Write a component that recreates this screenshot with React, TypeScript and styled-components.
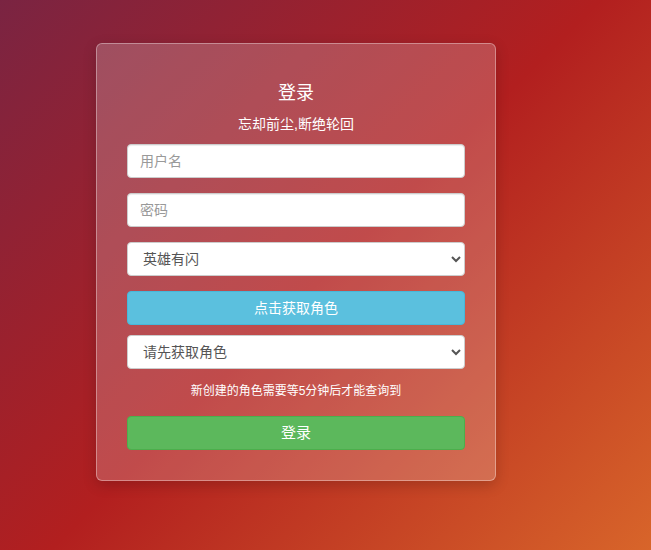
import { createGlobalStyle } from "styled-components";
import styled from "styled-components";

const GlobalStyle = createGlobalStyle`
  html, body {
    margin: 0;
    padding: 0;
  }
  body {
    min-height: 100vh;
    background: linear-gradient(135deg, #7a2442 0%, #b21f1f 50%, #d8652a 100%);
    font-family: "Helvetica Neue", Helvetica, Arial, "Noto Sans CJK SC", sans-serif;
    font-size: 14px;
    color: #333;
  }
  #root {
    min-height: 100vh;
  }
`;

const Page = styled.div`
  padding: 43px 0 0 96px;
  box-sizing: border-box;
  min-height: 100vh;
`;

const Card = styled.div`
  width: 400px;
  box-sizing: border-box;
  padding: 30px 30px 30px;
  border: 1px solid rgba(255, 255, 255, 0.35);
  border-radius: 6px;
  background: rgba(255, 255, 255, 0.2);
  box-shadow: 0 4px 14px rgba(0, 0, 0, 0.18);
  display: flex;
  flex-direction: column;
  text-align: center;
`;

const Title = styled.h3`
  margin: 9px 0 0;
  font-size: 18px;
  font-weight: 400;
  line-height: 20px;
  color: #fff;
`;

const Subtitle = styled.p`
  margin: 11px 0 10px;
  font-size: 14px;
  line-height: 20px;
  color: #fff;
`;

const Input = styled.input<{ $gap?: number }>`
  display: block;
  width: 100%;
  height: 34px;
  box-sizing: border-box;
  margin: 0 0 ${(p) => p.$gap ?? 15}px;
  padding: 6px 12px;
  font: inherit;
  color: #555;
  background: #fff;
  border: 1px solid #ccc;
  border-radius: 4px;
  box-shadow: inset 0 1px 1px rgba(0, 0, 0, 0.075);
  &::placeholder {
    color: #999;
  }
`;

const Select = styled.select<{ $gap?: number }>`
  display: block;
  width: 100%;
  height: 34px;
  box-sizing: border-box;
  margin: 0 0 ${(p) => p.$gap ?? 15}px;
  padding: 6px 8px 6px 11px;
  font: inherit;
  color: #555;
  background: #fff;
  border: 1px solid #ccc;
  border-radius: 4px;
`;

const Button = styled.button<{ $kind: "info" | "success"; $gap?: number }>`
  display: block;
  width: 100%;
  height: 34px;
  box-sizing: border-box;
  margin: 0 0 ${(p) => p.$gap ?? 0}px;
  padding: 6px 12px;
  font-family: inherit;
  font-size: ${(p) => (p.$kind === "success" ? 15 : 14)}px;
  line-height: 20px;
  color: #fff;
  border-radius: 4px;
  cursor: pointer;
  background: ${(p) => (p.$kind === "info" ? "#5bc0de" : "#5cb85c")};
  border: 1px solid ${(p) => (p.$kind === "info" ? "#46b8da" : "#4cae4c")};
`;

const Note = styled.p`
  margin: 0 0 16px;
  font-size: 12px;
  line-height: 17px;
  color: #fff;
`;

export default function App() {
  return (
    <>
      <GlobalStyle />
      <Page>
        <Card>
          <Title>登录</Title>
          <Subtitle>忘却前尘,断绝轮回</Subtitle>
          <Input type="text" placeholder="用户名" />
          <Input type="password" placeholder="密码" />
          <Select defaultValue="1">
            <option value="1">英雄有闪</option>
          </Select>
          <Button $kind="info" $gap={10}>点击获取角色</Button>
          <Select defaultValue="" $gap={14}>
            <option value="">请先获取角色</option>
          </Select>
          <Note>新创建的角色需要等5分钟后才能查询到</Note>
          <Button $kind="success">登录</Button>
        </Card>
      </Page>
    </>
  );
}
